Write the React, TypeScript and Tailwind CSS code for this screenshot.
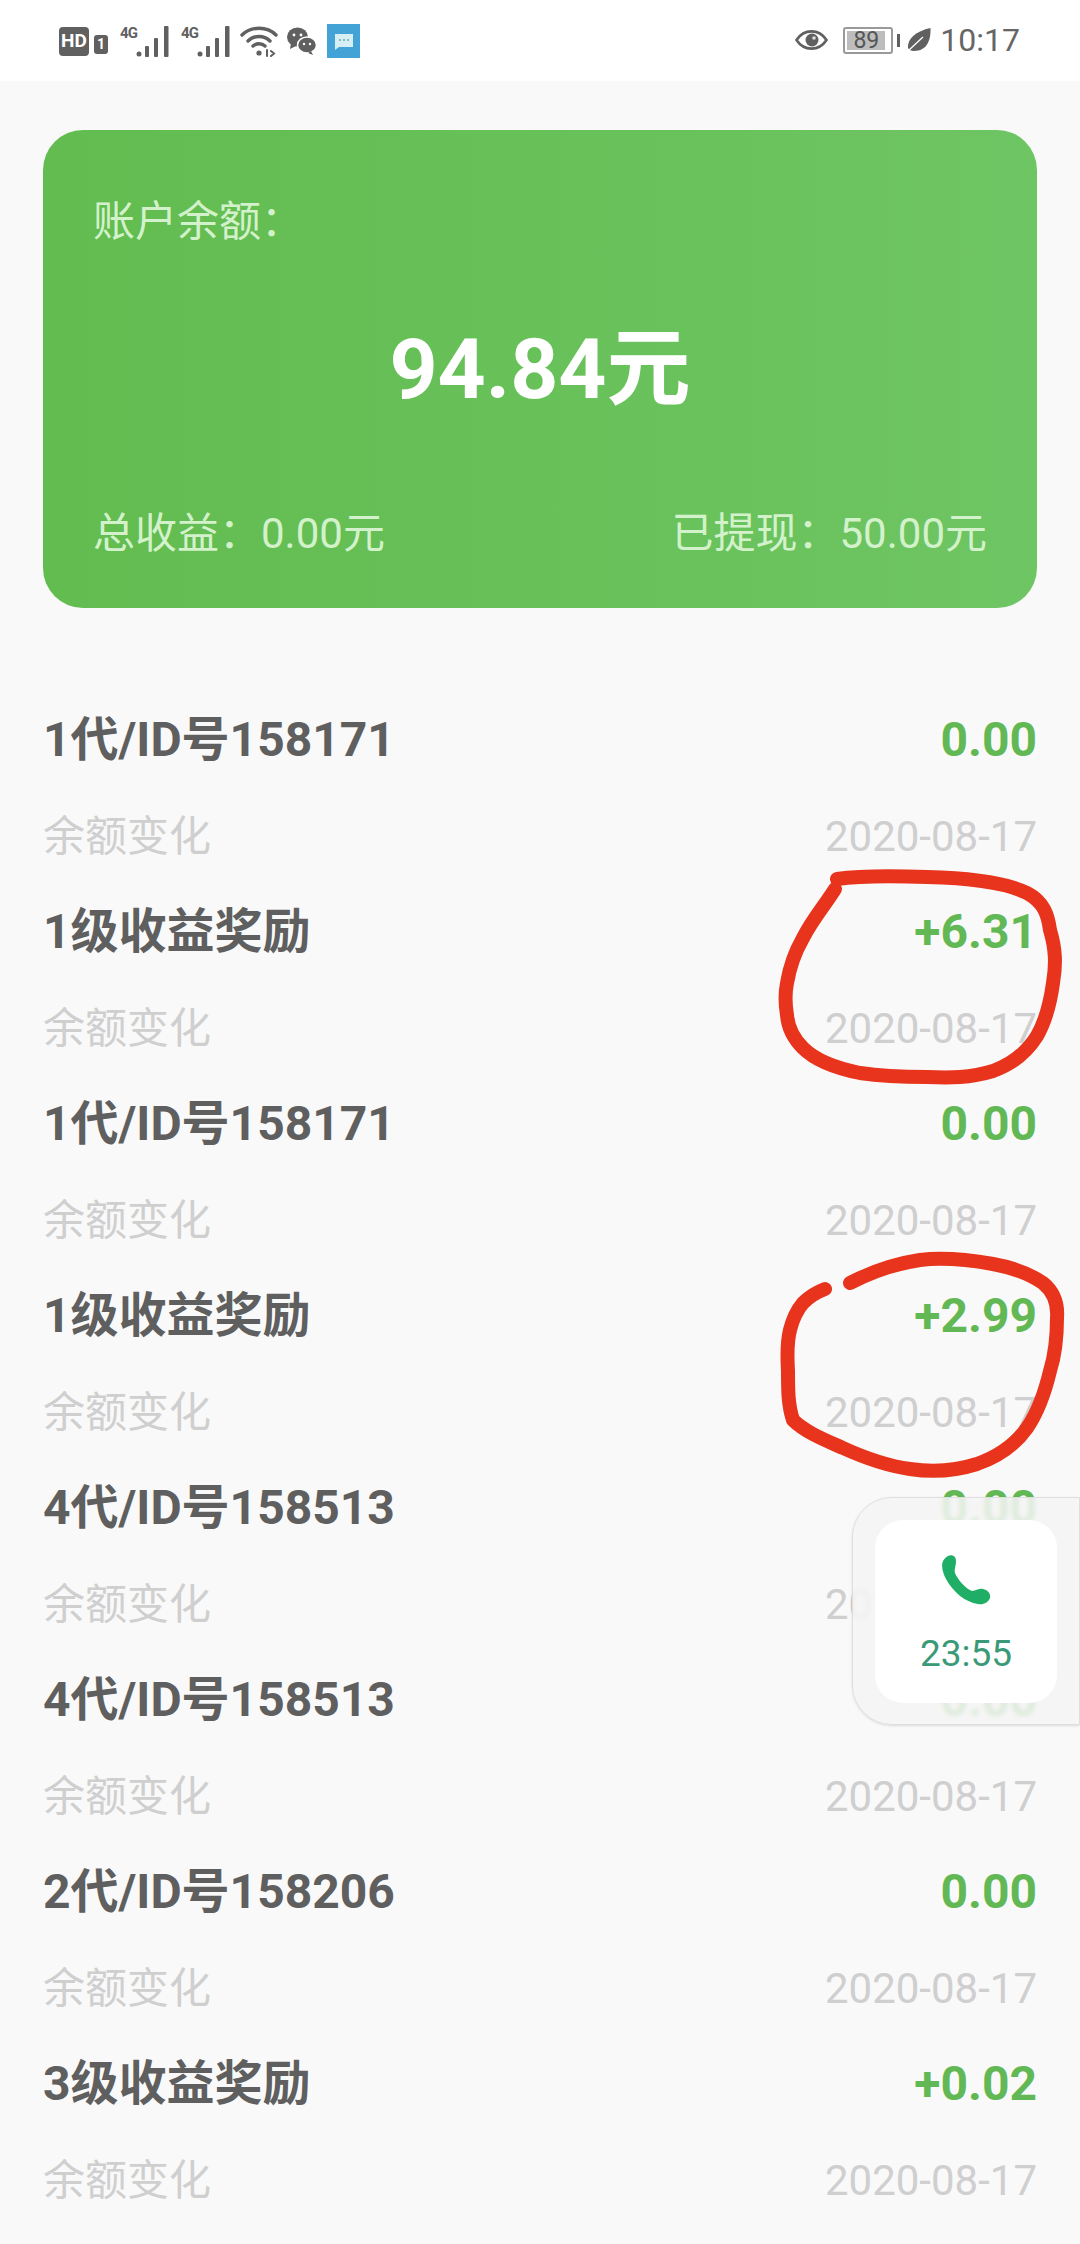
const font = '[font-family:Roboto,"Noto_Sans_CJK_SC",sans-serif]';

const records = [
  { title: '1代/ID号158171', amount: '0.00' },
  { title: '1级收益奖励', amount: '+6.31' },
  { title: '1代/ID号158171', amount: '0.00' },
  { title: '1级收益奖励', amount: '+2.99' },
  { title: '4代/ID号158513', amount: '0.00' },
  { title: '4代/ID号158513', amount: '0.00' },
  { title: '2代/ID号158206', amount: '0.00' },
  { title: '3级收益奖励', amount: '+0.02' },
];

const Signal = () => (
  <div className="flex h-[32px] w-[50px] items-start">
    <span className="w-[16px] whitespace-nowrap text-[15px] font-bold leading-[17px] tracking-tighter text-[#606060]">4G</span>
    <svg width="34" height="32" viewBox="0 0 34 32" fill="#606060">
      <circle cx="3" cy="29" r="2.500" />
      <rect x="9" y="21" width="4" height="11" rx="1" />
      <rect x="18" y="13" width="4" height="19" rx="1" />
      <rect x="28" y="1" width="4.500" height="31" rx="1" />
    </svg>
  </div>
);

const StatusBar = () => (
  <div className="flex h-[81px] items-start justify-between bg-white pl-[59px] pr-[60px] pt-[24px]">
    <div className="flex items-center">
      <div className="flex h-[29px] w-[30px] items-center justify-center rounded-[4px] bg-[#606060] text-[19px] font-bold text-white">HD</div>
      <div className="ml-[5px] mt-[6px] flex h-[19px] w-[14px] items-center justify-center rounded-[3px] bg-[#606060] text-[14px] font-bold leading-none text-white">1</div>
      <div className="ml-[12px]"><Signal /></div>
      <div className="ml-[11px]"><Signal /></div>
      <svg className="ml-[9px]" width="38" height="32" viewBox="0 0 38 32" fill="none" stroke="#606060" strokeWidth="3.400" strokeLinecap="round">
        <path d="M2 10C11 1 27 1 36 10" />
        <path d="M8 16C14 10 24 10 30 16" />
        <path d="M13 21C16 18 22 18 25 21" />
        <circle cx="19" cy="28" r="2.600" fill="#606060" stroke="none" />
        <path d="M27 25v6M31 26l3 2.500-3 2.500" strokeWidth="2" />
      </svg>
      <svg className="ml-[8px]" width="31" height="28" viewBox="0 0 31 28" fill="#606060">
        <ellipse cx="11.500" cy="10" rx="10.500" ry="9.500" />
        <path d="M5 16l-1 6 6-3z" />
        <ellipse cx="21" cy="18" rx="9.500" ry="8" stroke="#fff" strokeWidth="1.500" />
        <path d="M25 24l2 4-5-2z" />
        <circle cx="8" cy="8" r="1.400" fill="#fff" />
        <circle cx="15" cy="8" r="1.400" fill="#fff" />
        <circle cx="18" cy="17" r="1.200" fill="#fff" />
        <circle cx="24" cy="17" r="1.200" fill="#fff" />
      </svg>
      <svg className="ml-[10px]" width="33" height="34" viewBox="0 0 33 34">
        <rect width="33" height="34" fill="#44a3d6" />
        <path d="M8 10h18v13H12l-4 3z" fill="#d8eef5" />
        <path d="M12 16h10" stroke="#7fbfc9" strokeWidth="2" strokeDasharray="2 2" />
      </svg>
    </div>
    <div className="flex items-center">
      <svg width="33" height="26" viewBox="0 0 33 26" fill="none">
        <path d="M1.500 13C9 1.500 24 1.500 31.500 13C24 24.500 9 24.500 1.500 13Z" stroke="#606060" strokeWidth="2.600" />
        <circle cx="17" cy="13" r="6.500" fill="#606060" />
        <circle cx="19" cy="11" r="1.800" fill="#ddd" />
      </svg>
      <div className="ml-[15px] flex h-[27px] w-[50px] items-center rounded-[3px] border-2 border-[#9a9a9a] p-[2px]">
        <div className={`flex h-full w-[38px] items-center justify-center bg-[#bdbdbd] text-[23px] leading-none text-[#555] ${font}`}>89</div>
      </div>
      <div className="ml-[4px] h-[13px] w-[3px] bg-[#606060]" />
      <svg className="ml-[7px]" width="24" height="24" viewBox="0 0 24 24">
        <path d="M23.500 0C24 12 20 23 7 23C4 23 2 22 1 20C0 11 9 3 23.500 0Z" fill="#606060" />
        <path d="M1 23L16 9" stroke="#fff" strokeWidth="1.300" />
      </svg>
      <span className="ml-[9px] text-[32px] leading-none text-[#666]">10:17</span>
    </div>
  </div>
);

const BalanceCard = () => (
  <div className="mx-[43px] mt-[49px] flex h-[478px] flex-col rounded-[40px] bg-gradient-to-r from-[#62bc4f] to-[#6ec563] px-[50px] text-[42px] text-[#d3f2cb]">
    <div className="mt-[68px] leading-[48px]">{'账户余额\uFF1A'}</div>
    <div className="mt-[76px] text-center text-[84px] font-bold leading-[96px] text-white">94.84元</div>
    <div className="mt-[92px] flex justify-between leading-[48px]">
      <span>{'总收益\uFF1A0.00元'}</span>
      <span>{'已提现\uFF1A50.00元'}</span>
    </div>
  </div>
);

const RecordRow = ({ title, amount }: { title: string; amount: string }) => (
  <div>
    <div className="flex h-[96px] items-center justify-between text-[48px] font-bold">
      <span className="text-[#5f5f5f]">{title}</span>
      <span className="text-[#62b854]">{amount}</span>
    </div>
    <div className="flex h-[96px] items-center justify-between text-[42px] text-[#cfcfcf]">
      <span>余额变化</span>
      <span>2020-08-17</span>
    </div>
  </div>
);

const Scribbles = () => (
  <svg className="absolute left-0 top-0" width="1080" height="1500" viewBox="0 0 1080 1500" fill="none" stroke="#e8341c" strokeWidth="14" strokeLinecap="round" strokeLinejoin="round">
    <path d="M837 879C865 875 900 876 927 877C970 878 1005 882 1027 893C1044 902 1048 915 1050 930C1056 950 1056 965 1053 983C1050 1005 1045 1022 1037 1036C1025 1055 1010 1065 993 1071C970 1078 950 1078 927 1077C905 1077 880 1076 860 1073C835 1068 815 1060 803 1048C793 1038 788 1028 787 1015C785 1003 785 993 787 983C790 965 795 952 803 938C812 920 825 905 835 889" />
    <path d="M850 1283C875 1270 900 1263 920 1260C945 1257 970 1260 993 1264C1015 1268 1030 1274 1043 1283C1054 1292 1058 1305 1057 1318C1057 1340 1055 1355 1050 1371C1045 1392 1038 1412 1027 1428C1015 1445 997 1457 977 1464C955 1471 930 1472 910 1469C888 1466 865 1458 843 1448C825 1440 805 1432 793 1420C788 1405 788 1390 788 1371C787 1355 787 1342 790 1330C793 1318 797 1310 803 1303C810 1296 817 1292 825 1289" />
  </svg>
);

const CallBubble = () => (
  <div className="absolute left-[852px] top-[1497px] flex h-[228px] w-[228px] rounded-l-[40px] border border-[#dedede] bg-[#f4f4f4]/85 shadow-sm backdrop-blur-[2px]">
    <div className="ml-[22px] mt-[22px] flex h-[183px] w-[182px] flex-col items-center rounded-[28px] bg-white">
      <svg className="mt-[35px]" width="50" height="50" viewBox="0 0 50 50">
        <path d="M7 1C11 -1 15 1 15 6C15 11 13 14 14 18C17 25 24 33 31 36C35 36 38 33 42 34C47 35 50 39 49 43C47 48 42 50 37 49C24 47 12 37 5 24C1 16 -2 6 7 1Z" fill="#1fae66" />
      </svg>
      <span className="mt-[29px] text-[37px] leading-[40px] text-[#3a9a78]">23:55</span>
    </div>
  </div>
);

export default function App() {
  return (
    <div className={`relative h-[2244px] overflow-hidden bg-[#f9f9f9] ${font}`}>
      <StatusBar />
      <BalanceCard />
      <div className="mx-[43px] mt-[84px]">
        {records.map((record, i) => (
          <RecordRow key={i} title={record.title} amount={record.amount} />
        ))}
      </div>
      <Scribbles />
      <CallBubble />
    </div>
  );
}
